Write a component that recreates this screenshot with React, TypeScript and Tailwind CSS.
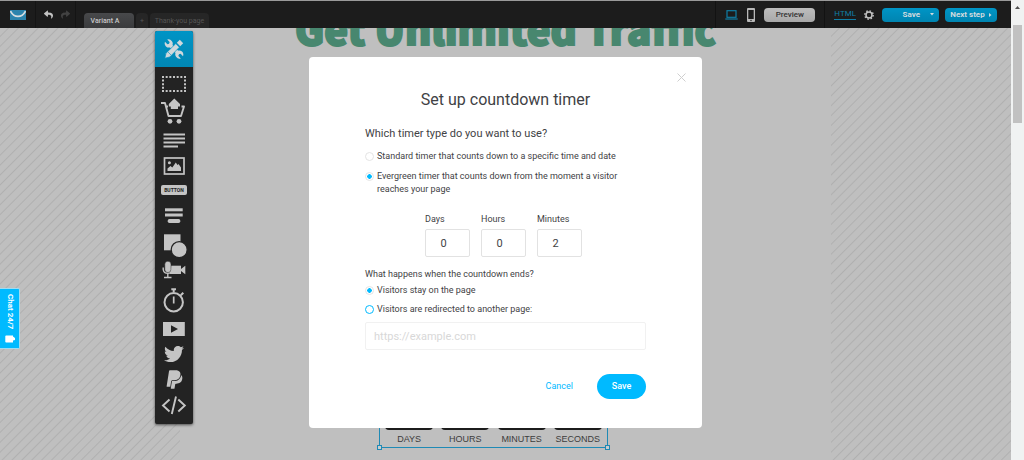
import type { ReactNode } from 'react'
import { FaPaypal, FaReply, FaShare, FaTwitter } from 'react-icons/fa'

const STRIPES =
  'w-[180px] shrink-0 bg-[repeating-linear-gradient(135deg,#bfbfbf_0px,#bfbfbf_5px,#b0b0b0_6px,#bfbfbf_7px)]'

function ToolsIcon() {
  return (
    <svg width="20" height="20" viewBox="0 0 20 20" aria-hidden="true">
      <path d="M5 5L15 15" stroke="#cfd8dc" strokeWidth="3.2" />
      <path
        d="M3.2 0.6L5.6 3L5.2 4.8L3.4 5.2L1 2.8A4.2 4.2 0 0 0 6.6 8.2L8.2 6.6A4.2 4.2 0 0 0 3.2 0.6ZM16.8 19.4L14.4 17L14.8 15.2L16.6 14.8L19 17.2A4.2 4.2 0 0 0 13.4 11.8L11.8 13.4A4.2 4.2 0 0 0 16.8 19.4Z"
        fill="#cfd8dc"
      />
      <path d="M0.8 19.2L2 14.2L11.8 4.6L15.4 8.2L5.8 18Z" fill="#cfd8dc" stroke="#0090c0" strokeWidth="0.7" />
      <path d="M12.8 3.8L15.8 0.8L19.2 4.2L16.2 7.2Z" fill="#cfd8dc" />
      <path d="M4 13L7 16" stroke="#0090c0" strokeWidth="0.6" />
    </svg>
  )
}

const tools: { name: string; art: ReactNode }[] = [
  {
    name: 'Section',
    art: (
      <g fill="none" stroke="#c4c4c4" strokeWidth="2">
        <path d="M7 7H31M7 21H31" strokeDasharray="2 1.67" />
        <path d="M8 9.5V20M30 9.5V20" strokeDasharray="2 1.67" />
      </g>
    ),
  },
  {
    name: 'Cart',
    art: (
      <>
        <path d="M6 6H10L13.5 19H26L29 9.5H26.5M11.5 9.5H13" fill="none" stroke="#c4c4c4" strokeWidth="1.9" strokeLinejoin="round" />
        <circle cx="15" cy="24.3" r="2.4" fill="#c4c4c4" />
        <circle cx="24" cy="24.3" r="2.4" fill="#c4c4c4" />
        <path d="M19.3 1.5L25 7V9.5H23V12H15.8V9.5H13.8V7Z" fill="#c4c4c4" />
      </>
    ),
  },
  {
    name: 'Text',
    art: <path d="M8.5 10.5H30M8.5 14.5H30M8.5 18.5H30M8.5 22.5H23" stroke="#c4c4c4" strokeWidth="1.9" />,
  },
  {
    name: 'Image',
    art: (
      <>
        <rect x="9.5" y="7" width="19.5" height="16" fill="none" stroke="#c4c4c4" strokeWidth="1.7" />
        <circle cx="14.4" cy="11.8" r="1.5" fill="#c4c4c4" />
        <path d="M12.5 20V17.5L15.5 15L17.3 16.5L20.8 11.5L22.5 14L23.5 13L26 16.5V20Z" fill="#c4c4c4" />
      </>
    ),
  },
  { name: 'Button', art: null },
  {
    name: 'Form',
    art: (
      <g fill="#c4c4c4">
        <rect x="10" y="3.3" width="17.7" height="3" />
        <rect x="10" y="8.5" width="17.7" height="3" />
        <rect x="12.7" y="14" width="12.6" height="4" rx="1.7" />
      </g>
    ),
  },
  {
    name: 'Shapes',
    art: (
      <>
        <rect x="9" y="2.3" width="16.5" height="16" fill="#c4c4c4" />
        <circle cx="24.2" cy="17.7" r="8" fill="#c4c4c4" stroke="#232323" strokeWidth="1.3" />
      </>
    ),
  },
  {
    name: 'Video and audio',
    art: (
      <>
        <rect x="15" y="6.7" width="11" height="8.3" fill="#c4c4c4" />
        <path d="M26 10L30.3 6.7V15.3L26 12Z" fill="#c4c4c4" />
        <rect x="9.8" y="2.2" width="6.2" height="11.4" rx="3.1" fill="#c4c4c4" stroke="#232323" strokeWidth="0.5" />
        <path d="M8.2 8.5V10.5A4.6 4.6 0 0 0 17.3 10.5V8.5M12.8 15V18.3M9 18.5H16.5" fill="none" stroke="#c4c4c4" strokeWidth="1.4" />
      </>
    ),
  },
  {
    name: 'Countdown',
    art: (
      <g fill="none" stroke="#c4c4c4">
        <circle cx="18.7" cy="16.2" r="9.2" strokeWidth="2" />
        <path d="M16.3 3.2H21M18.7 3V6M25.8 9.3L28.3 6.8" strokeWidth="2" />
        <path d="M18.7 10.5V17.5" strokeWidth="1.7" />
      </g>
    ),
  },
  {
    name: 'Player',
    art: <path fillRule="evenodd" d="M8 9H29.8V23H8ZM16 12.2V19.8L23 16Z" fill="#c4c4c4" />,
  },
  { name: 'Twitter', art: <FaTwitter x={9} y={4} size={20} color="#c4c4c4" /> },
  { name: 'PayPal', art: <FaPaypal x={9} y={2} size={21} color="#c4c4c4" /> },
  {
    name: 'Custom code',
    art: (
      <path d="M14.5 5.5L8 11.5L14.5 17.5M23.3 5.5L29.8 11.5L23.3 17.5M21 2.5L16.8 20" fill="none" stroke="#c4c4c4" strokeWidth="1.9" />
    ),
  },
]

function Toolbar() {
  return (
    <nav className="absolute left-[155px] top-[31px] flex w-[38px] flex-col rounded-xs bg-[#232323] pb-[3px] shadow-[0_1px_3px_rgba(0,0,0,0.6)]">
      <button aria-label="Tools" className="mb-[3px] flex h-9 items-center justify-center rounded-t-xs bg-linear-to-b from-[#0094c5] to-[#0086b3]">
        <ToolsIcon />
      </button>
      {tools.map((tool) => (
        <button key={tool.name} aria-label={tool.name} className="flex h-[27px] items-center justify-center">
          {tool.art ? (
            <svg width="38" height="27" viewBox="0 0 38 27" className="overflow-visible" aria-hidden="true">
              {tool.art}
            </svg>
          ) : (
            <span className="mb-1 rounded-xs bg-[#c4c4c4] px-[3px] text-[5px] leading-[10px] font-bold text-[#232323]">BUTTON</span>
          )}
        </button>
      ))}
    </nav>
  )
}

function Header() {
  return (
    <header className="flex h-7 shrink-0 items-stretch border-t border-[#9a9a9a] bg-[#1c1c1c] pr-3.5 text-[8px] leading-[10px]">
      <div className="flex w-9 items-center border-r border-[#141414] pl-2.5">
        <svg width="16" height="10" viewBox="0 0 16 10" aria-label="Logo">
          <rect width="16" height="10" fill="#2b84ad" />
          <path d="M0.5 1C4 8.2 12 8.2 15.5 1" fill="none" stroke="#d5dde0" strokeWidth="1.7" />
        </svg>
      </div>
      <div className="flex w-10 items-center gap-2 border-r border-[#141414] pl-2">
        <button aria-label="Undo">
          <FaReply size={9} className="text-[#c4c4c4]" />
        </button>
        <button aria-label="Redo">
          <FaShare size={9} className="text-[#424242]" />
        </button>
      </div>
      <div className="flex items-end gap-0.5 pl-2 text-[7px]">
        <button className="h-[15px] w-[50px] rounded-t-sm bg-linear-to-b from-[#48494b] to-[#3a3b3d] pr-2 font-medium text-[#c8c8c8]">Variant A</button>
        <button className="h-[15px] w-3 rounded-t-sm bg-[#262626] text-[#555555]">+</button>
        <button className="h-[15px] w-[59px] rounded-t-sm bg-[#262626] text-[#555555]">Thank-you page</button>
      </div>
      <div className="ml-auto flex items-center border-l border-[#121212] pl-[9px]">
        <button aria-label="Desktop view">
          <svg width="13" height="10" viewBox="0 0 13 10" fill="none" stroke="#107ea6" aria-hidden="true">
            <rect x="2" y="0.7" width="9" height="6.6" strokeWidth="1.2" />
            <path d="M0.3 9H12.7" strokeWidth="1.2" />
          </svg>
        </button>
        <button aria-label="Mobile view" className="ml-[9px]">
          <svg width="8" height="14" viewBox="0 0 8 14" aria-hidden="true">
            <rect width="8" height="14" rx="1" fill="#b8b8b8" />
            <rect x="1.3" y="2" width="5.4" height="9" fill="#1c1c1c" />
            <circle cx="4" cy="12.5" r="0.7" fill="#1c1c1c" />
          </svg>
        </button>
        <button className="ml-[9px] h-3.5 w-[51px] rounded-sm bg-linear-to-b from-[#bdbdbd] to-[#a8a8a8] font-medium text-[#333333]">Preview</button>
      </div>
      <div className="ml-[9px] flex items-center border-l border-[#121212] pl-[9px]">
        <a href="#html" className="border-b border-[#107ea6] text-[#107ea6]">HTML</a>
        <button aria-label="Settings" className="ml-2">
          <svg width="10" height="10" viewBox="0 0 10 10" fill="none" stroke="#c4c4c4" aria-hidden="true">
            <circle cx="5" cy="5" r="3" strokeWidth="1.5" />
            <circle cx="5" cy="5" r="4.2" strokeWidth="1.4" strokeDasharray="1.5 1.8" />
          </svg>
        </button>
        <button className="ml-2 flex h-3.5 w-[57px] items-center justify-end gap-2.5 rounded-sm bg-linear-to-b from-[#0095c6] to-[#0084b0] pr-[5px] font-bold text-[#d0dade]">
          Save
          <svg width="4" height="3" viewBox="0 0 4 3" fill="#d0dade" aria-hidden="true">
            <path d="M0 0H4L2 2.5Z" />
          </svg>
        </button>
        <button className="ml-1.5 flex h-3.5 w-[52px] items-center justify-center gap-1 rounded-sm bg-linear-to-b from-[#0095c6] to-[#0084b0] font-bold whitespace-nowrap text-[#d0dade]">
          Next step
          <svg width="3" height="4" viewBox="0 0 3 4" fill="#d0dade" aria-hidden="true">
            <path d="M0 0V4L2.5 2Z" />
          </svg>
        </button>
      </div>
    </header>
  )
}

function Handle({ side }: { side: string }) {
  return <span className={`absolute -bottom-[3px] size-[5px] border border-[#1f8ab5] bg-[#cccccc] ${side}`} />
}

function Canvas() {
  return (
    <div className="flex min-h-0 flex-1 bg-[#bfbfbf]">
      <div className={STRIPES} />
      <main className="flex min-w-0 flex-1 flex-col justify-between overflow-hidden">
        <h1 className="-mt-[22px] text-center font-['Noto_Sans_CJK_SC','Noto_Sans',sans-serif] text-[40px] leading-[44px] font-black whitespace-nowrap text-[#48876f] [-webkit-text-stroke:2px_#48876f]">
          Get Unlimited Traffic
        </h1>
        <div className="relative mb-3 ml-[199px] flex h-24 w-[229px] items-end border border-[#1f8ab5] px-px pb-0.5 font-['Liberation_Sans'] text-[9px] leading-3 text-[#3c3c3c]">
          {['DAYS', 'HOURS', 'MINUTES', 'SECONDS'].map((unit) => (
            <div key={unit} className="flex flex-1 flex-col items-center gap-[3px]">
              <span className="h-[70px] w-12 rounded-sm bg-[#1c1c1c]" />
              {unit}
            </div>
          ))}
          <Handle side="-left-[3px]" />
          <Handle side="-right-[3px]" />
        </div>
      </main>
      <div className={STRIPES} />
    </div>
  )
}

function Radio({ name, label, checked, ring = 'border-[#e4e4e4]' }: { name: string; label: string; checked?: boolean; ring?: string }) {
  return (
    <label className="flex items-start gap-[3px] text-[9px] leading-[13px] text-[#3f4245]">
      <input
        type="radio"
        name={name}
        defaultChecked={checked}
        className={`mt-0.5 size-[9px] shrink-0 appearance-none rounded-full border bg-white checked:bg-[radial-gradient(circle,#00baff_2px,transparent_2.5px)] ${ring}`}
      />
      {label}
    </label>
  )
}

const durations = [
  { label: 'Days', value: '0' },
  { label: 'Hours', value: '0' },
  { label: 'Minutes', value: '2' },
]

function TimerDialog() {
  return (
    <div role="dialog" aria-labelledby="dialog-title" className="relative w-[393px] rounded bg-white px-14 pt-[33px] pb-[29px] text-[#3f4245]">
      <button aria-label="Close" className="absolute top-4 right-4">
        <svg width="9" height="9" viewBox="0 0 9 9" stroke="#cfcfcf" aria-hidden="true">
          <path d="M0.5 0.5L8.5 8.5M8.5 0.5L0.5 8.5" />
        </svg>
      </button>
      <h2 id="dialog-title" className="text-center text-[16px] leading-5">Set up countdown timer</h2>
      <p className="mt-4 text-[11px] leading-4">Which timer type do you want to use?</p>
      <div className="mt-2 flex flex-col gap-[7px]">
        <Radio name="type" label="Standard timer that counts down to a specific time and date" />
        <Radio name="type" label="Evergreen timer that counts down from the moment a visitor reaches your page" checked />
      </div>
      <div className="mt-[18px] flex justify-center gap-[11px] pr-1">
        {durations.map((d) => (
          <label key={d.label} className="flex w-[45px] flex-col gap-1 text-[9px] leading-[11px]">
            {d.label}
            <input defaultValue={d.value} className="h-7 w-full rounded-xs border border-[#e2e2e2] pr-2 text-center text-[11px]" />
          </label>
        ))}
      </div>
      <p className="mt-3 text-[9px] leading-[11px]">What happens when the countdown ends?</p>
      <div className="mt-1 flex flex-col gap-[6px]">
        <Radio name="end" label="Visitors stay on the page" checked />
        <Radio name="end" label="Visitors are redirected to another page:" ring="border-[#00baff]" />
      </div>
      <input
        aria-label="Redirect address"
        placeholder="https://example.com"
        className="mt-1.5 h-7 w-full rounded-xs border border-[#f1f1f1] px-2 text-[11px] placeholder:text-[#d8d8d8]"
      />
      <div className="mt-6 flex items-center justify-end gap-6 text-[9px] leading-[13px]">
        <button className="text-[#00baff]">Cancel</button>
        <button className="h-[25px] w-[49px] rounded-full bg-[#00baff] font-medium text-white">Save</button>
      </div>
    </div>
  )
}

export default function App() {
  return (
    <div className="flex h-screen overflow-hidden font-[Roboto,sans-serif]">
      <div className="relative flex min-w-0 flex-1 flex-col">
        <Header />
        <Canvas />
        <Toolbar />
        <button className="absolute top-[288px] left-0 flex h-[61px] w-5 flex-col items-center justify-center gap-1.5 rounded-r-xs border border-l-0 border-[#9fdcf2] bg-[#00baff] text-[8px] leading-[10px] font-bold text-white">
          <span className="[writing-mode:vertical-rl]">Chat 24/7</span>
          <svg width="10" height="8" viewBox="0 0 10 8" fill="#ffffff" aria-hidden="true">
            <path d="M1 0.5H8V1.5L10 3V5L8 5.5V7.5H1L0.3 7V1Z" />
          </svg>
        </button>
        <div className="absolute inset-x-0 top-[57px] flex justify-center">
          <TimerDialog />
        </div>
      </div>
      <div className="flex w-[13px] shrink-0 flex-col items-center bg-[#f0f2f2] pt-1.5">
        <svg width="5" height="3" viewBox="0 0 5 3" fill="#505050" aria-hidden="true">
          <path d="M0 3L2.5 0L5 3Z" />
        </svg>
        <div className="mt-4 h-[98px] w-[9px] bg-[#c1c1c1]" />
      </div>
    </div>
  )
}
